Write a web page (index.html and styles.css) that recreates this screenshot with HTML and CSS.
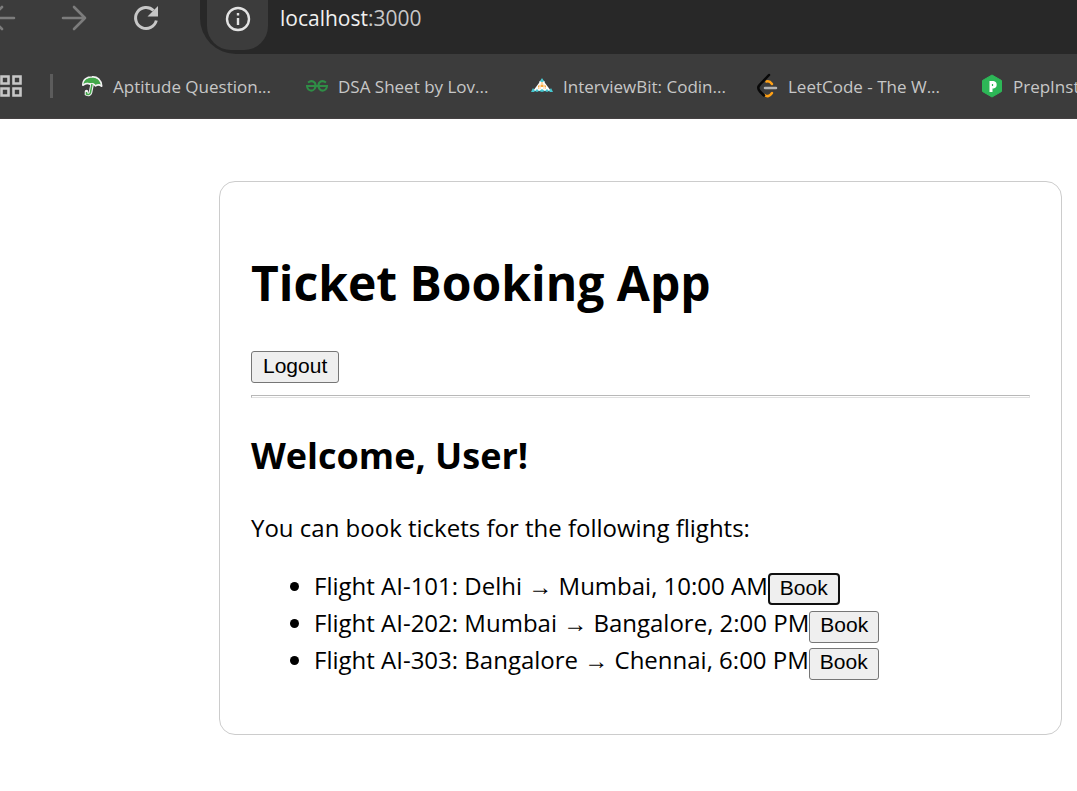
FILE: index.html
```html
<!DOCTYPE html>
<html lang="en">
<head>
<meta charset="utf-8">
<title>Ticket Booking App</title>
<link rel="stylesheet" href="styles.css">
</head>
<body>
<header class="browser">
  <div class="toolbar">
    <nav class="nav" aria-label="History">
      <button class="nav-button dim" aria-label="Back"><svg class="nav-icon" viewBox="0 0 26 26"><path d="M25 13H3M13 2L2 13l11 11"/></svg></button>
      <button class="nav-button dim" aria-label="Forward"><svg class="nav-icon" viewBox="0 0 26 26"><path d="M2 13h22M13 2l11 11-11 11"/></svg></button>
      <button class="nav-button" aria-label="Reload"><svg class="nav-icon reload" viewBox="0 0 26 26"><path d="M23.300 15.500A10.500 10.500 0 1 1 20.500 5.500"/><path class="solid" d="M25 1v10.500H14.500z"/></svg></button>
    </nav>
    <div class="address">
      <button class="site-info" aria-label="Site information"><svg class="info-icon" viewBox="0 0 26 26"><circle cx="13" cy="13" r="11"/><path d="M13 12v7M13 7v2.500"/></svg></button>
      <span class="url"><span class="host">localhost</span>:3000</span>
    </div>
  </div>
  <nav class="bookmarks" aria-label="Bookmarks">
    <button class="apps" aria-label="Apps"><svg class="apps-icon" viewBox="0 0 24 24"><path d="M1.500 2.500h7v7h-7zM13.500 2.500h7v7h-7zM1.500 14.500h7v7h-7zM13.500 14.500h7v7h-7z"/></svg></button>
    <span class="divider"></span>
    <a class="bookmark" href="#"><svg class="favicon" viewBox="0 0 22 22"><path d="M2 10C2 5 6 2 11 2c5-.5 9 3 9.500 9-2-1.500-4-1.500-6-.3-1-1.500-3-2.200-5.200-1.600C7 7.800 4 8.200 2 10z" fill="#43a84a" stroke="#f2f2f2" stroke-width="2" stroke-linejoin="round"/><path d="M11 10L9.500 17.500Q8.500 20.500 5.500 19v-2.500" fill="none" stroke="#f2f2f2" stroke-width="3.600" stroke-linecap="round"/><path d="M11 9L9.500 17.500Q8.500 20.500 5.500 19v-2" fill="none" stroke="#43a84a" stroke-width="1.500"/><path d="M2.500 9C3 5 6.500 2.800 11 2.800c4.500 0 8 2.500 8.700 6.700-2-.8-3.700-.5-5.200.2-1.500-1.700-3.500-2.200-5.500-1.700Q5.500 6.800 2.500 9z" fill="#43a84a"/></svg><span>Aptitude Question...</span></a>
    <a class="bookmark" href="#"><svg class="favicon" viewBox="0 0 22 22" fill="none" stroke="#2f8d46" stroke-width="2"><path d="M2 7.500Q6 4.500 9 8q1.500 3.500-.5 6Q6 17 2.500 14.500 1 13 1 11h20q0 2-1.500 3.500Q16 17 13.500 14q-2-2.500-.5-6Q16 4.500 20 7.500"/></svg><span>DSA Sheet by Lov...</span></a>
    <a class="bookmark" href="#"><svg class="favicon" viewBox="0 0 22 22"><path d="M11 4L2 16h18z" fill="#fff"/><path d="M11 3L8.500 7h5z" fill="#45c6cf"/><path d="M7 11l4-4 4 4v3h-3v-2h-2v2H7z" fill="#f9a83c"/><path d="M8 9h6M5 13h12M9 6v9M13 6v9" stroke="#fff" stroke-width="1"/><path d="M0 17l2-4 2 3 2-2 2 2 3-2 3 2 2-2 2 2 2-3 2 4h-3l-1-1-2 1-2-1-3 1-3-1-2 1-2-1-1 1z" fill="#45c6cf"/></svg><span>InterviewBit: Codin...</span></a>
    <a class="bookmark" href="#"><svg class="favicon" viewBox="0 0 22 22" fill="none" stroke-width="2.500" stroke-linecap="round"><path d="M10.500 6.500q3-1 5.500 2.500M8.500 20q4 3 7.500-2" stroke="#ffa116"/><path d="M13 0L4 9.500q-3.500 3.500 0 7L8 20.500" stroke="#080808"/><path d="M9 13h11" stroke="#b3b3b3"/></svg><span>LeetCode - The W...</span></a>
    <a class="bookmark" href="#"><svg class="favicon" viewBox="0 0 22 22"><path d="M11 0l9.500 5.500v11L11 22 1.500 16.500v-11z" fill="#2db757" stroke="#2db757" stroke-linejoin="round"/><path d="M8.500 6h4a3.800 3.800 0 0 1 0 7.500h-1V17h-3z" fill="#fff"/><path d="M11.500 9v2" stroke="#2db757" stroke-width="1.200"/></svg><span>PrepInst</span></a>
  </nav>
</header>
<main class="card">
  <h1 class="title">Ticket Booking App</h1>
  <button class="button">Logout</button>
  <hr class="rule">
  <h2 class="welcome">Welcome, User!</h2>
  <p class="intro">You can book tickets for the following flights:</p>
  <ul class="flights">
    <li>Flight AI-101: Delhi → Mumbai, 10:00 AM<button class="button focused">Book</button></li>
    <li>Flight AI-202: Mumbai → Bangalore, 2:00 PM<button class="button">Book</button></li>
    <li>Flight AI-303: Bangalore → Chennai, 6:00 PM<button class="button">Book</button></li>
  </ul>
</main>
</body>
</html>
```
FILE: styles.css
```css
* { box-sizing: border-box; }
body {
  margin: 0;
  background: #fff;
  color: #000;
  font: 24px/37px "Open Sans", "Noto Sans", sans-serif;
  overflow-x: hidden;
}
svg { display: block; overflow: visible; }

.browser {
  background: #3c3c3c;
  border-bottom: 1px solid #454142;
  color: #c7c7c7;
  overflow: hidden;
}
.toolbar { display: flex; height: 54px; }
.nav {
  display: flex;
  flex: none;
  gap: 46px;
  height: 36px;
  margin-left: -11px;
  width: 211px;
}
.nav-button, .site-info, .apps {
  display: flex;
  align-items: center;
  justify-content: center;
  padding: 0;
  border: 0;
  background: none;
  color: #c7c7c7;
}
.dim { color: #7c7c7c; }
.nav-icon {
  width: 26px;
  height: 26px;
  fill: none;
  stroke: currentColor;
  stroke-width: 2.6;
  stroke-linecap: round;
  stroke-linejoin: round;
}
.reload { stroke-width: 3; stroke-linecap: butt; }
.solid { fill: currentColor; stroke: none; }
.address {
  display: flex;
  flex: 1;
  background: #282828;
  border-bottom-left-radius: 36px;
  padding-left: 7px;
  gap: 12px;
}
.site-info {
  width: 61px;
  height: 50px;
  padding-bottom: 12px;
  background: #3c3c3c;
  border-radius: 0 0 24px 24px;
  color: #e3e3e3;
}
.info-icon { width: 26px; height: 26px; fill: none; stroke: currentColor; stroke-width: 2.4; }
.url { font-size: 21px; line-height: 36px; }
.host { color: #f0f0f0; }

.bookmarks { display: flex; align-items: center; height: 64px; }
.apps { flex: none; width: 24px; }
.apps-icon { width: 24px; height: 24px; fill: none; stroke: #c7c7c7; stroke-width: 2.6; }
.divider { flex: none; width: 3px; height: 24px; margin: 0 28px 0 26px; background: #5c5c5c; }
.bookmark {
  display: flex;
  flex: none;
  align-items: center;
  gap: 10px;
  width: 225px;
  color: #c7c7c7;
  font-size: 17px;
  text-decoration: none;
  white-space: nowrap;
}
.bookmark:last-child { width: auto; }
.favicon { flex: none; width: 22px; height: 22px; }

.card {
  margin: 62px 15px 56px 219px;
  padding: 31px;
  border: 1px solid #ccc;
  border-radius: 16px;
}
.title { margin: 37px 0 35px; font-size: 48px; line-height: 66px; }
.button {
  display: inline-block;
  height: 32px;
  padding: 0 11px 3px;
  border: 1px solid #767676;
  border-radius: 3px;
  background: #efefef;
  color: #000;
  font: 21px/24px "Liberation Sans", Arial, sans-serif;
}
.title + .button { display: block; }
.flights .button { padding: 0 10px 3px; }
.flights .focused { border: 2px solid #101010; border-radius: 4px; padding: 0 10px 2px; }
.rule { margin: 12px 0 0; height: 3px; border: 1px solid #b8b8b8; border-bottom-color: #e0e0e0; border-right-color: #e0e0e0; }
.welcome { margin: 34px 0 31px; font-size: 36px; line-height: 48px; }
.intro { margin: 0 0 22px; line-height: 34px; }
.flights { margin: 0 0 25px; padding-left: 63px; }
.flights li { height: 37px; white-space: nowrap; }
```
